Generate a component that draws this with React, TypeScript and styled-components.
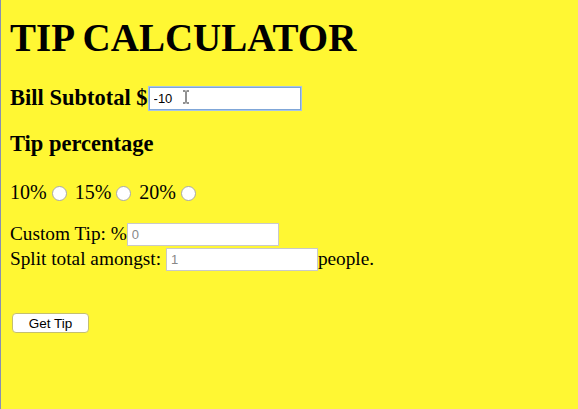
import React from "react";
import styled, { createGlobalStyle } from "styled-components";

const Global = createGlobalStyle`
  html, body { margin: 0; padding: 0; }
  body {
    background: #fff733;
    font-family: "Liberation Serif", "Times New Roman", serif;
    color: #000;
    min-height: 409px;
  }
`;

const Page = styled.div`
  padding: 0 9px;
  min-height: 409px;
  box-sizing: border-box;
  border-left: 1px solid #8a8fb0;
`;

const Title = styled.h1`
  margin: 0;
  padding-top: 16px;
  font-size: 39px;
  font-weight: bold;
  line-height: 44px;
`;

const Heading = styled.h3<{ $top: number }>`
  margin: ${(p) => p.$top}px 0 0;
  font-size: 22.5px;
  font-weight: bold;
  line-height: 26px;
  display: flex;
  align-items: center;
`;

const TextInput = styled.input<{ $focus?: boolean }>`
  box-sizing: border-box;
  width: 152px;
  height: 23px;
  margin: 0;
  padding: 1px 4px;
  border: 1px solid ${(p) => (p.$focus ? "#7fa6d8" : "#c9c9c9")};
  box-shadow: ${(p) => (p.$focus ? "0 0 0 1px #a6c3ea" : "none")};
  background: #fff;
  font-family: "Liberation Sans", Arial, sans-serif;
  font-size: 13px;
  color: #000;
  outline: none;
  &::placeholder { color: #888; }
`;

const FocusWrap = styled.span`
  position: relative;
  display: inline-flex;
  margin-left: 1px;
`;

const Cursor = styled.svg`
  position: absolute;
  left: 33px;
  top: 3px;
`;

const Row = styled.div<{ $top: number; $size: number }>`
  margin-top: ${(p) => p.$top}px;
  font-size: ${(p) => p.$size}px;
  line-height: 24px;
  display: flex;
  align-items: center;
`;

const Radio = styled.span<{ $gap: number }>`
  display: inline-block;
  width: 15px;
  height: 15px;
  border-radius: 50%;
  border: 1px solid #a8a8a8;
  background: #fff;
  margin: 2px ${(p) => p.$gap}px 0 5px;
  box-sizing: border-box;
`;

const Button = styled.button`
  margin: 42px 0 0 2px;
  width: 77px;
  height: 20px;
  padding: 0;
  background: #fff;
  border: 1px solid #c4bf70;
  border-radius: 4px;
  font-family: "Liberation Sans", Arial, sans-serif;
  font-size: 13.5px;
  color: #000;
`;

export default function App() {
  return (
    <>
      <Global />
      <Page>
        <Title>TIP CALCULATOR</Title>
        <Heading $top={25}>
          Bill Subtotal $
          <FocusWrap>
            <TextInput $focus defaultValue="-10" />
            <Cursor width="8" height="14" viewBox="0 0 8 14">
              <path d="M1 1h2.5M4.5 1H7M4 1.5v11M1 13h2.5M4.5 13H7" stroke="#222" strokeWidth="1" fill="none" />
            </Cursor>
          </FocusWrap>
        </Heading>
        <Heading $top={20}>Tip percentage</Heading>
        <Row $top={23} $size={20}>
          10%<Radio $gap={8} />15%<Radio $gap={8} />20%<Radio $gap={0} />
        </Row>
        <Row $top={18} $size={19.3}>
          Custom Tip: %<TextInput placeholder="0" />
        </Row>
        <Row $top={1} $size={19.3}>
          Split total amongst:&nbsp;<TextInput placeholder="1" />people.
        </Row>
        <Button>Get Tip</Button>
      </Page>
    </>
  );
}
